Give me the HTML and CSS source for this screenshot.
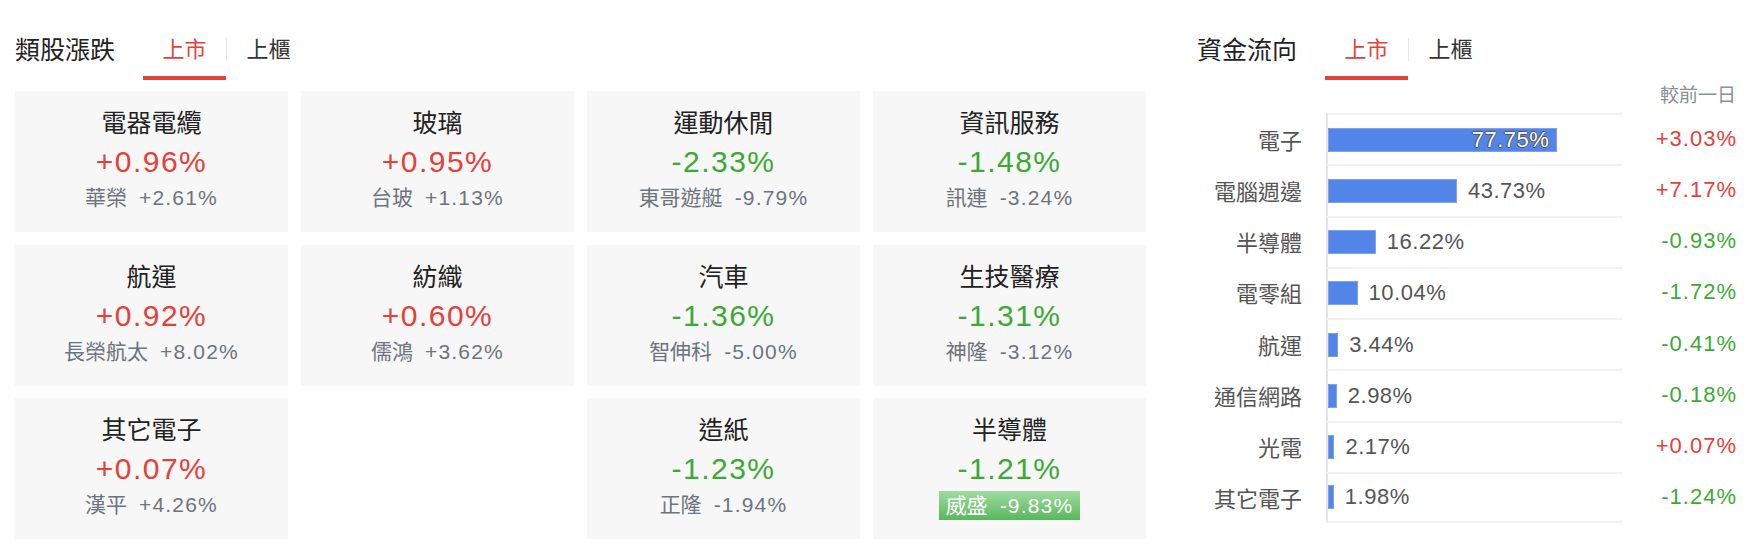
FILE: index.html
```html
<!DOCTYPE html>
<html lang="zh-Hant">

<head>
  <meta charset="utf-8">
  <meta name="viewport" content="width=device-width, initial-scale=1">
  <title>類股漲跌 / 資金流向</title>
  <link rel="stylesheet" href="styles.css">
</head>

<body>
  <div class="page">
    <section class="sectors">
      <div class="head">
        <h2 class="title">類股漲跌</h2>
        <div class="tabs">
          <span class="tab active">上市</span>
          <span class="sep"></span>
          <span class="tab">上櫃</span>
        </div>
      </div>

      <div class="grid">
        <div class="card">
          <div class="name">電器電纜</div>
          <div class="pct up">+0.96%</div>
          <div class="lead"><span>華榮</span><span class="num">+2.61%</span></div>
        </div>
        <div class="card">
          <div class="name">玻璃</div>
          <div class="pct up">+0.95%</div>
          <div class="lead"><span>台玻</span><span class="num">+1.13%</span></div>
        </div>
        <div class="card">
          <div class="name">運動休閒</div>
          <div class="pct down">-2.33%</div>
          <div class="lead"><span>東哥遊艇</span><span class="num">-9.79%</span></div>
        </div>
        <div class="card">
          <div class="name">資訊服務</div>
          <div class="pct down">-1.48%</div>
          <div class="lead"><span>訊連</span><span class="num">-3.24%</span></div>
        </div>

        <div class="card">
          <div class="name">航運</div>
          <div class="pct up">+0.92%</div>
          <div class="lead"><span>長榮航太</span><span class="num">+8.02%</span></div>
        </div>
        <div class="card">
          <div class="name">紡織</div>
          <div class="pct up">+0.60%</div>
          <div class="lead"><span>儒鴻</span><span class="num">+3.62%</span></div>
        </div>
        <div class="card">
          <div class="name">汽車</div>
          <div class="pct down">-1.36%</div>
          <div class="lead"><span>智伸科</span><span class="num">-5.00%</span></div>
        </div>
        <div class="card">
          <div class="name">生技醫療</div>
          <div class="pct down">-1.31%</div>
          <div class="lead"><span>神隆</span><span class="num">-3.12%</span></div>
        </div>

        <div class="card">
          <div class="name">其它電子</div>
          <div class="pct up">+0.07%</div>
          <div class="lead"><span>漢平</span><span class="num">+4.26%</span></div>
        </div>
        <div class="card empty"></div>
        <div class="card">
          <div class="name">造紙</div>
          <div class="pct down">-1.23%</div>
          <div class="lead"><span>正隆</span><span class="num">-1.94%</span></div>
        </div>
        <div class="card">
          <div class="name">半導體</div>
          <div class="pct down">-1.21%</div>
          <div class="lead badge"><span>威盛</span><span class="num">-9.83%</span></div>
        </div>
      </div>
    </section>

    <section class="flow">
      <div class="head">
        <h2 class="title">資金流向</h2>
        <div class="tabs">
          <span class="tab active">上市</span>
          <span class="sep"></span>
          <span class="tab">上櫃</span>
        </div>
      </div>

      <div class="compare">較前一日</div>

      <div class="chart">
        <div class="row">
          <span class="label">電子</span>
          <div class="track">
            <div class="bar inside" style="width: 77.75%"><span>77.75%</span></div>
          </div>
          <span class="chg up">+3.03%</span>
        </div>
        <div class="row">
          <span class="label">電腦週邊</span>
          <div class="track">
            <div class="bar" style="width: 43.73%"></div><span class="val">43.73%</span>
          </div>
          <span class="chg up">+7.17%</span>
        </div>
        <div class="row">
          <span class="label">半導體</span>
          <div class="track">
            <div class="bar" style="width: 16.22%"></div><span class="val">16.22%</span>
          </div>
          <span class="chg down">-0.93%</span>
        </div>
        <div class="row">
          <span class="label">電零組</span>
          <div class="track">
            <div class="bar" style="width: 10.04%"></div><span class="val">10.04%</span>
          </div>
          <span class="chg down">-1.72%</span>
        </div>
        <div class="row">
          <span class="label">航運</span>
          <div class="track">
            <div class="bar" style="width: 3.44%"></div><span class="val">3.44%</span>
          </div>
          <span class="chg down">-0.41%</span>
        </div>
        <div class="row">
          <span class="label">通信網路</span>
          <div class="track">
            <div class="bar" style="width: 2.98%"></div><span class="val">2.98%</span>
          </div>
          <span class="chg down">-0.18%</span>
        </div>
        <div class="row">
          <span class="label">光電</span>
          <div class="track">
            <div class="bar" style="width: 2.17%"></div><span class="val">2.17%</span>
          </div>
          <span class="chg up">+0.07%</span>
        </div>
        <div class="row">
          <span class="label">其它電子</span>
          <div class="track">
            <div class="bar" style="width: 1.98%"></div><span class="val">1.98%</span>
          </div>
          <span class="chg down">-1.24%</span>
        </div>
      </div>
    </section>
  </div>
</body>

</html>
```

FILE: styles.css
```css
* {
  margin: 0;
  padding: 0;
  box-sizing: border-box;
}

body {
  font-family: "Liberation Sans", "Noto Sans CJK TC", sans-serif;
  color: #222;
  background-color: #fff;
}

.page {
  display: flex;
  padding-left: 15px;
}

.sectors {
  width: 1131px;
}

.flow {
  width: 539px;
  margin-left: 51px;
}

/* header with tabs */
.head {
  display: flex;
  align-items: center;
  height: 56px;
  margin-top: 24px;
}

.title {
  width: 100px;
  font-size: 25px;
  font-weight: normal;
  line-height: 52px;
  padding-bottom: 4px;
  white-space: nowrap;
}

.tabs {
  display: flex;
  align-items: center;
  height: 56px;
  margin-left: 28px;
}

.tab {
  height: 56px;
  padding: 0 19.5px;
  font-size: 22px;
  line-height: 52px;
  color: #333;
  border-bottom: 4px solid transparent;
}

.tab.active {
  color: #e5403a;
  border-bottom-color: #e5403a;
}

.sep {
  width: 1px;
  height: 23px;
  margin-bottom: 5px;
  background-color: #e8e8e8;
}

/* sector cards */
.grid {
  display: grid;
  grid-template-columns: repeat(4, 273px);
  grid-auto-rows: 141px;
  gap: 12.5px 13px;
  margin-top: 11px;
}

.card {
  display: flex;
  flex-direction: column;
  align-items: center;
  padding-top: 13px;
  background-color: #f7f7f7;
}

.card.empty {
  background: none;
}

.name {
  font-size: 25px;
  line-height: 38px;
}

.pct {
  font-size: 30px;
  line-height: 40px;
  letter-spacing: 1.5px;
}

.lead {
  font-size: 21px;
  line-height: 32px;
  color: #6d747d;
}

.lead .num {
  margin-left: 12px;
  letter-spacing: 1.2px;
}

.badge {
  margin-top: 1.5px;
  padding: 0 7px 0 7px;
  line-height: 29px;
  color: #fff;
  background: linear-gradient(#9fdca0, #5ab65d);
}

.up {
  color: #e5403a;
}

.down {
  color: #3da935;
}

/* money flow chart */
.compare {
  margin-top: 3.5px;
  font-size: 19px;
  line-height: 24px;
  text-align: right;
  color: #8a9099;
}

.chart {
  margin-top: 5.5px;
}

.row {
  display: flex;
  align-items: center;
  height: 51.25px;
}

.label {
  width: 129px;
  padding-right: 24px;
  font-size: 22px;
  text-align: right;
  color: #555;
  white-space: nowrap;
}

.track {
  display: flex;
  align-items: center;
  align-self: stretch;
  width: 297px;
  border-top: 2px solid #f2f2f2;
  border-left: 2px solid #e4e4e4;
}

.row:last-child .track {
  border-bottom: 2px solid #f2f2f2;
}

.bar {
  height: 24px;
  background-color: #5385e8;
  box-shadow: inset 0 0 0 1px #7ea2ee;
}

.bar.inside {
  display: flex;
  align-items: center;
  justify-content: flex-end;
  padding-right: 8px;
  font-size: 22px;
  letter-spacing: 0.5px;
  color: #fff;
  text-shadow: -1px 0 #555, 1px 0 #555, 0 -1px #555, 0 1px #555;
}

.val {
  margin-left: 11px;
  font-size: 22px;
  letter-spacing: 0.5px;
  color: #555;
}

.chg {
  flex: 1;
  font-size: 22px;
  letter-spacing: 1px;
  text-align: right;
  margin-right: -1px;
}
```
